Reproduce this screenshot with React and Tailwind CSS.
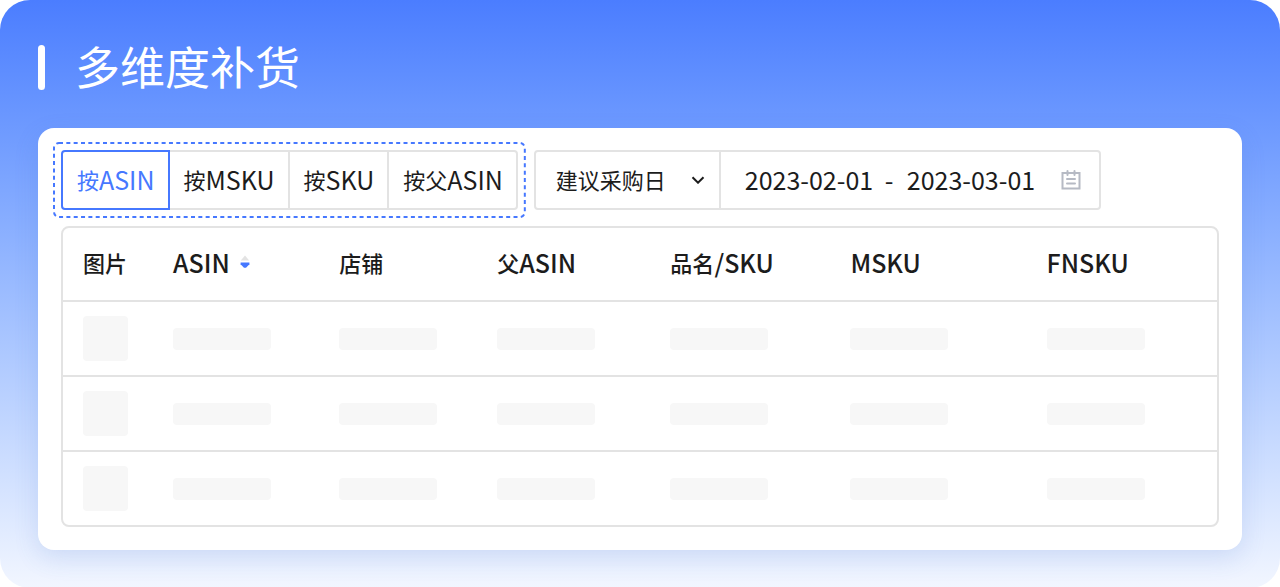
import { useState } from 'react'
import clsx from 'clsx'

const TABS = [
  { id: 'asin',   zh: '按',   en: 'ASIN' },
  { id: 'msku',   zh: '按',   en: 'MSKU' },
  { id: 'sku',    zh: '按',   en: 'SKU' },
  { id: 'parent', zh: '按父', en: 'ASIN' },
]

const COLUMNS = [
  { id: 'image',  zh: '图片', en: '',      width: 'w-[7.8%]' },
  { id: 'asin',   zh: '',     en: 'ASIN',  width: 'w-[14.4%]', sortable: true },
  { id: 'store',  zh: '店铺', en: '',      width: 'w-[13.7%]' },
  { id: 'parent', zh: '父',   en: 'ASIN',  width: 'w-[15%]' },
  { id: 'name',   zh: '品名', en: '/SKU',  width: 'w-[15.6%]' },
  { id: 'msku',   zh: '',     en: 'MSKU',  width: 'w-[17%]' },
  { id: 'fnsku',  zh: '',     en: 'FNSKU', width: 'w-[16.5%]' },
]

const ROWS = [1, 2, 3]

// Latin letters are set a little larger than the Chinese ones
function Label({ zh, en }) {
  return (
    <span className="inline-flex items-center leading-8">
      {zh && <span className="text-[22px] leading-8">{zh}</span>}
      {en && <span className="text-[25px] leading-8">{en}</span>}
    </span>
  )
}

function SortIcon() {
  return (
    <svg className="w-[10px] h-[14px] shrink-0" viewBox="0 0 10 14" aria-hidden="true">
      <path d="M5 0.6 9.2 5.4H0.8z" fill="#e3e3e3" />
      <path d="M0.6 7.6h8.8v1.6L6 12.8H4L0.6 9.2z" fill="#4678ff" />
    </svg>
  )
}

function CalendarIcon() {
  return (
    <svg className="w-5 h-5 shrink-0" viewBox="0 0 20 20" fill="none" stroke="#b6bac4" strokeWidth="2" aria-hidden="true">
      <path d="M1.5 3h17v15.5h-17z" />
      <path d="M6.5 1v4M13.5 1v4" strokeLinecap="round" />
      <path d="M6 9h8M6 13.5h8" strokeLinecap="round" />
    </svg>
  )
}

function Tabs({ active, onChange }) {
  return (
    <div className="relative p-2">
      <svg className="absolute inset-px w-[calc(100%-2px)] h-[calc(100%-2px)] overflow-visible pointer-events-none" aria-hidden="true">
        <rect width="100%" height="100%" rx="5" fill="none" stroke="#4678ff" strokeWidth="2" strokeDasharray="4 3.33" />
      </svg>
      <div className="flex h-[60px]">
        {TABS.map((tab) => (
          <button
            key={tab.id}
            type="button"
            onClick={() => onChange(tab.id)}
            className={clsx(
              'flex items-center pl-[14px] pr-[13px] pb-[2px] border-2 -ml-[2px] first:ml-0 first:rounded-l last:rounded-r',
              'whitespace-nowrap',
              tab.id === active ? 'relative border-[#4678ff] text-[#4678ff]' : 'border-[#e3e3e3]',
            )}
          >
            <Label zh={tab.zh} en={tab.en} />
          </button>
        ))}
      </div>
    </div>
  )
}

function DateFilter() {
  const [start, setStart] = useState('2023-02-01')
  const [end, setEnd] = useState('2023-03-01')

  return (
    <div className="flex h-[60px] border-2 border-[#e3e3e3] rounded">
      <div className="relative flex border-r-2 border-[#e3e3e3]">
        <select
          aria-label="日期类型"
          className="appearance-none bg-transparent pl-5 pr-[52px] pb-[2px] text-[22px] leading-8 outline-none"
        >
          <option>建议采购日</option>
        </select>
        <svg className="absolute right-[14px] top-1/2 -translate-y-1/2 w-[14px] h-2 pointer-events-none" viewBox="0 0 14 8" fill="none" stroke="#1c1c1c" strokeWidth="2" aria-hidden="true">
          <path d="M1.5 1.2 7 6.7l5.5-5.5" />
        </svg>
      </div>
      <div className="flex items-center pl-6 pr-[18px] text-[25px] leading-8">
        <input
          aria-label="开始日期"
          value={start}
          onChange={(e) => setStart(e.target.value)}
          className="w-[132px] pb-[2px] outline-none"
        />
        <span className="w-[30px] pl-2 pb-[2px]">-</span>
        <input
          aria-label="结束日期"
          value={end}
          onChange={(e) => setEnd(e.target.value)}
          className="w-[132px] pb-[2px] outline-none"
        />
        <span className="ml-[22px]"><CalendarIcon /></span>
      </div>
    </div>
  )
}

function ReplenishTable() {
  return (
    <div className="border-2 border-[#e3e3e3] rounded-lg overflow-hidden">
      <table className="w-full table-fixed border-collapse">
        <thead>
          <tr className="h-[73px] border-b-2 border-[#e3e3e3]">
            {COLUMNS.map((col) => (
              <th key={col.id} scope="col" className={clsx('pl-5 pb-1 text-left font-medium whitespace-nowrap', col.width)}>
                <div className="flex items-center gap-[10px]">
                  <Label zh={col.zh} en={col.en} />
                  {col.sortable && <SortIcon />}
                </div>
              </th>
            ))}
          </tr>
        </thead>
        <tbody>
          {ROWS.map((row) => (
            <tr key={row} className="h-[75px] border-b-2 border-[#e3e3e3] last:h-[74px] last:border-b-0">
              {COLUMNS.map((col) => (
                <td key={col.id} className="pl-5">
                  <div className={clsx('bg-[#f7f7f7] rounded', col.id === 'image' ? 'w-[45px] h-[45px]' : 'w-[98px] h-[22px]')} />
                </td>
              ))}
            </tr>
          ))}
        </tbody>
      </table>
    </div>
  )
}

export default function App() {
  const [active, setActive] = useState('asin')

  return (
    <main className="min-h-screen px-[38px] pt-[45px] pb-[38px] rounded-[30px] bg-linear-to-b from-[#4b7dff] to-[#f2f6ff] text-[#1c1c1c] font-['Noto_Sans_CJK_SC',sans-serif]">
      <header className="flex items-center gap-[30px] h-[45px]">
        <span className="w-[7px] h-[45px] rounded-full bg-white" />
        <h1 className="pb-1 text-[45px] leading-[45px] text-white">多维度补货</h1>
      </header>

      <section className="mt-[38px] px-[23px] pt-[14px] pb-[23px] rounded-2xl bg-white shadow-[0_8px_24px_rgba(70,110,200,0.16)]">
        <div className="flex items-center gap-2 -ml-2 mb-2">
          <Tabs active={active} onChange={setActive} />
          <DateFilter />
        </div>
        <ReplenishTable />
      </section>
    </main>
  )
}
